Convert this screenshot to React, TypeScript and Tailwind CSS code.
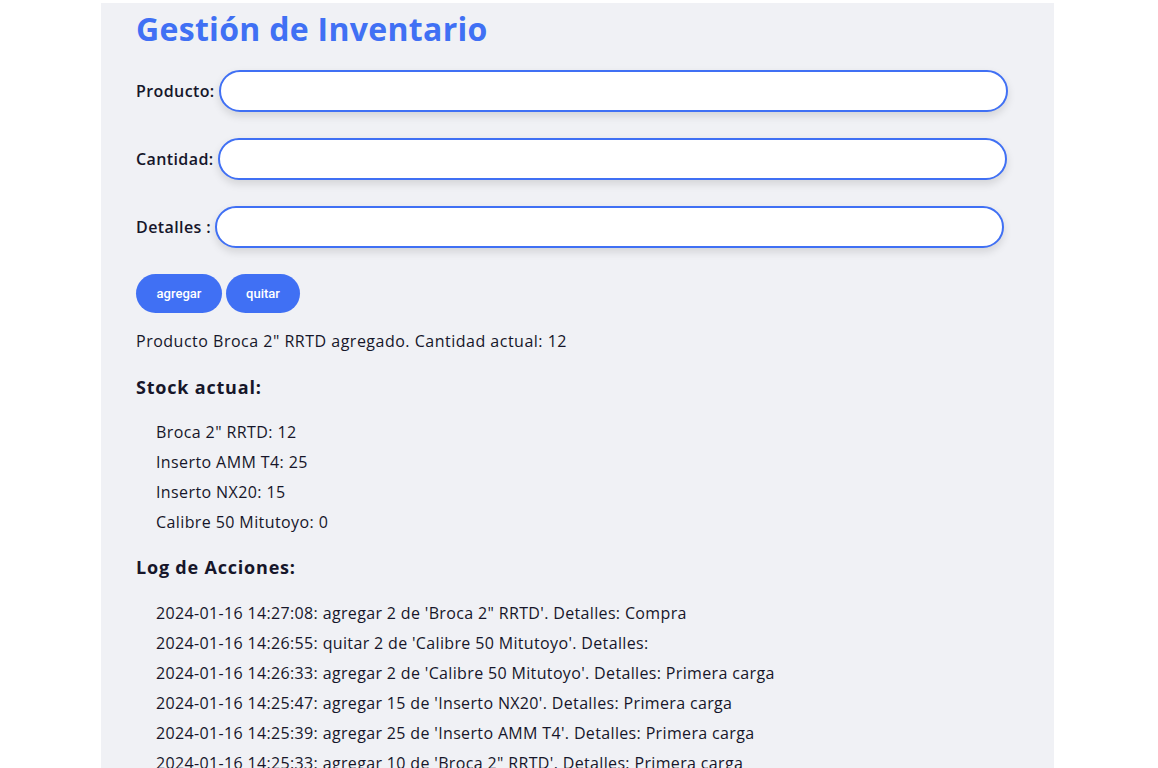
import React from 'react';

const stock = [
  'Broca 2" RRTD: 12',
  'Inserto AMM T4: 25',
  'Inserto NX20: 15',
  'Calibre 50 Mitutoyo: 0',
];

const log = [
  `2024-01-16 14:27:08: agregar 2 de 'Broca 2" RRTD'. Detalles: Compra`,
  `2024-01-16 14:26:55: quitar 2 de 'Calibre 50 Mitutoyo'. Detalles:`,
  `2024-01-16 14:26:33: agregar 2 de 'Calibre 50 Mitutoyo'. Detalles: Primera carga`,
  `2024-01-16 14:25:47: agregar 15 de 'Inserto NX20'. Detalles: Primera carga`,
  `2024-01-16 14:25:39: agregar 25 de 'Inserto AMM T4'. Detalles: Primera carga`,
  `2024-01-16 14:25:33: agregar 10 de 'Broca 2" RRTD'. Detalles: Primera carga`,
];

const Field: React.FC<{ label: string }> = ({ label }) => (
  <div className="flex items-center gap-1">
    <label className="text-[16px] font-semibold tracking-[0.4px] text-[#16162a]">{label}</label>
    <input
      type="text"
      className="h-[42px] w-[789px] rounded-full border-2 border-[#4070f4] bg-white px-4 shadow-[0_4px_8px_rgba(0,0,0,0.12)] outline-none"
    />
  </div>
);

const App: React.FC = () => {
  return (
    <div className="min-h-screen bg-white font-['Open_Sans',sans-serif] text-[#16162a]">
      <div className="ml-[101px] mt-[3px] w-[953px] bg-[#f0f1f5] px-[35px] pt-[6px] pb-10">
        <h1 className="text-[32px] font-bold leading-[40px] tracking-[0.3px] text-[#4070f4]">Gestión de Inventario</h1>

        <div className="mt-[21px] flex flex-col gap-[26px]">
          <Field label="Producto:" />
          <Field label="Cantidad:" />
          <Field label="Detalles :" />
        </div>

        <div className="mt-[26px] flex gap-1 font-['Roboto',sans-serif] text-[13px] font-medium text-white">
          <button className="h-[39px] w-[86px] rounded-full bg-[#4070f4]">agregar</button>
          <button className="h-[39px] w-[74px] rounded-full bg-[#4070f4]">quitar</button>
        </div>

        <p className="mt-4 text-[16px] leading-6 tracking-[0.5px]">Producto Broca 2" RRTD agregado. Cantidad actual: 12</p>

        <h3 className="mt-[21px] text-[18px] font-bold leading-[27px] tracking-[0.8px]">Stock actual:</h3>
        <ul className="mt-4 pl-5 text-[16px] tracking-[0.4px]">
          {stock.map((s) => (
            <li key={s} className="leading-[30px]">{s}</li>
          ))}
        </ul>

        <h3 className="mt-[17px] text-[18px] font-bold leading-[27px] tracking-[0.8px]">Log de Acciones:</h3>
        <ul className="mt-[17px] pl-5 text-[16px] tracking-[0.35px]">
          {log.map((s) => (
            <li key={s} className="leading-[30px]">{s}</li>
          ))}
        </ul>
      </div>
    </div>
  );
};

export default App;
